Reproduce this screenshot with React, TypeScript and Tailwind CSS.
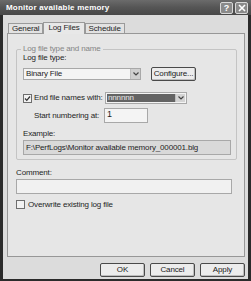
import React from "react";

const font = { fontFamily: '"Liberation Sans", Arial, sans-serif' };

function Arrow({ light = false }: { light?: boolean }) {
  return (
    <div className={`w-[10px] h-full flex items-center justify-center ${light ? "bg-[#d4d4d4]" : "bg-[#cfcfcf]"} border-l border-[#bdbdbd]`}>
      <svg width="6" height="4" viewBox="0 0 6 4">
        <path d="M0.5 0.5 L3 3 L5.5 0.5" fill="none" stroke="#444" strokeWidth="1.2" />
      </svg>
    </div>
  );
}

function Check({ checked }: { checked: boolean }) {
  return (
    <div className="w-[9px] h-[9px] shrink-0 border border-[#6e6e6e] bg-[#f2f2f2] flex items-center justify-center">
      {checked && (
        <svg width="7" height="7" viewBox="0 0 7 7">
          <path d="M1 3.5 L2.8 5.3 L6 1.5" fill="none" stroke="#333" strokeWidth="1.2" />
        </svg>
      )}
    </div>
  );
}

function Btn({ children }: { children: React.ReactNode }) {
  return (
    <div className="w-[45px] h-[14px] rounded-[2px] border border-[#4a4a4a] bg-[#ececec] flex items-center justify-center text-[8px] text-[#222] shadow-[inset_-1px_-1px_0_#bdbdbd] whitespace-nowrap">
      {children}
    </div>
  );
}

export default function App() {
  return (
    <div className="w-[251px] h-[281px] bg-[#2b2b2b] flex flex-col overflow-hidden" style={font}>
      {/* title bar */}
      <div className="h-[15px] flex items-center pl-[6px] pr-[3px] bg-gradient-to-b from-[#6b6b6b] via-[#555] to-[#484848]">
        <div className="text-white font-bold text-[8px] tracking-[0.2px] flex-1 leading-none whitespace-nowrap">Monitor available memory</div>
        <div className="flex gap-[2px] mt-[1px]">
          <div className="w-[13px] h-[12px] rounded-[2px] border border-[#d8d8d8] bg-[#8a8a8a] flex items-center justify-center text-white text-[9px] font-bold leading-none">?</div>
          <div className="w-[13px] h-[12px] rounded-[2px] border border-[#d8d8d8] bg-[#8a8a8a] flex items-center justify-center">
            <svg width="8" height="8" viewBox="0 0 8 8">
              <path d="M1 1 L7 7 M7 1 L1 7" stroke="#fff" strokeWidth="1.6" />
            </svg>
          </div>
        </div>
      </div>
      {/* body */}
      <div className="flex-1 mx-[3px] mb-[2px] bg-[#dcdcdc] flex flex-col text-[8px] tracking-[-0.15px] text-[#1e1e1e] whitespace-nowrap">
        {/* tabs */}
        <div className="flex items-end ml-[5px] mt-[7px] h-[11px]">
          <div className="h-[10px] px-[3px] border border-b-0 border-[#9a9a9a] bg-[#e2e2e2] flex items-center leading-none">General</div>
          <div className="h-[12px] px-[4px] border border-b-0 border-[#9a9a9a] bg-[#e8e8e8] flex items-start pt-[1px] leading-none relative top-[1px] z-10">Log Files</div>
          <div className="h-[10px] px-[3px] border border-b-0 border-[#9a9a9a] bg-[#e2e2e2] flex items-center leading-none">Schedule</div>
        </div>
        {/* panel */}
        <div className="ml-[4px] w-[238px] h-[224px] border border-[#979797] bg-[#e6e6e6] pl-[8px] pt-[11px] flex flex-col">
          {/* groupbox */}
          <div className="relative w-[221px] h-[111px] border border-[#c4c4c4] rounded-[2px] mt-[4px] pl-[6px] flex flex-col">
            <div className="absolute -top-[5px] left-[4px] px-[2px] bg-[#e6e6e6] text-[#858585] leading-none text-[8px]">Log file type and name</div>
            <div className="mt-[4px] leading-none">Log file type:</div>
            <div className="flex items-center mt-[5px] gap-[10px]">
              <div className="w-[118px] h-[12px] border border-[#a8a8a8] bg-[#f4f4f4] flex items-center">
                <div className="flex-1 pl-[2px] leading-none">Binary File</div>
                <Arrow />
              </div>
              <Btn>Configure...</Btn>
            </div>
            <div className="flex items-center mt-[11px] h-[12px]">
              <Check checked />
              <div className="ml-[2px] w-[71px] leading-none">End file names with:</div>
              <div className="w-[82px] h-[12px] border border-[#a8a8a8] bg-[#f4f4f4] flex items-center p-[1px]">
                <div className="flex-1 h-full bg-[#646464] text-[#e8e8e8] pl-[1px] flex items-center leading-none">nnnnnn</div>
                <Arrow light />
              </div>
            </div>
            <div className="flex items-center mt-[4px]">
              <div className="ml-[11px] w-[70px] leading-none">Start numbering at:</div>
              <div className="w-[44px] h-[15px] border border-[#a8a8a8] bg-[#f4f4f4] pl-[2px] pt-[1px] leading-none text-[9px]">1</div>
            </div>
            <div className="mt-[7px] leading-none">Example:</div>
            <div className="mt-[2px] w-[208px] h-[15px] border border-[#a8a8a8] bg-[#d9d9d9] flex items-center pl-[2px] leading-none">F:\PerfLogs\Monitor available memory_000001.blg</div>
          </div>
          <div className="mt-[9px] leading-none">Comment:</div>
          <div className="mt-[2px] w-[216px] h-[15px] border border-[#a8a8a8] bg-[#f1f1f1]" />
          <div className="flex items-center mt-[6px]">
            <Check checked={false} />
            <div className="ml-[3px] leading-none">Overwrite existing log file</div>
          </div>
        </div>
        {/* buttons */}
        <div className="flex justify-end gap-[5px] mt-[6px] pr-[3px]">
          <Btn>OK</Btn>
          <Btn>Cancel</Btn>
          <Btn>Apply</Btn>
        </div>
      </div>
    </div>
  );
}
